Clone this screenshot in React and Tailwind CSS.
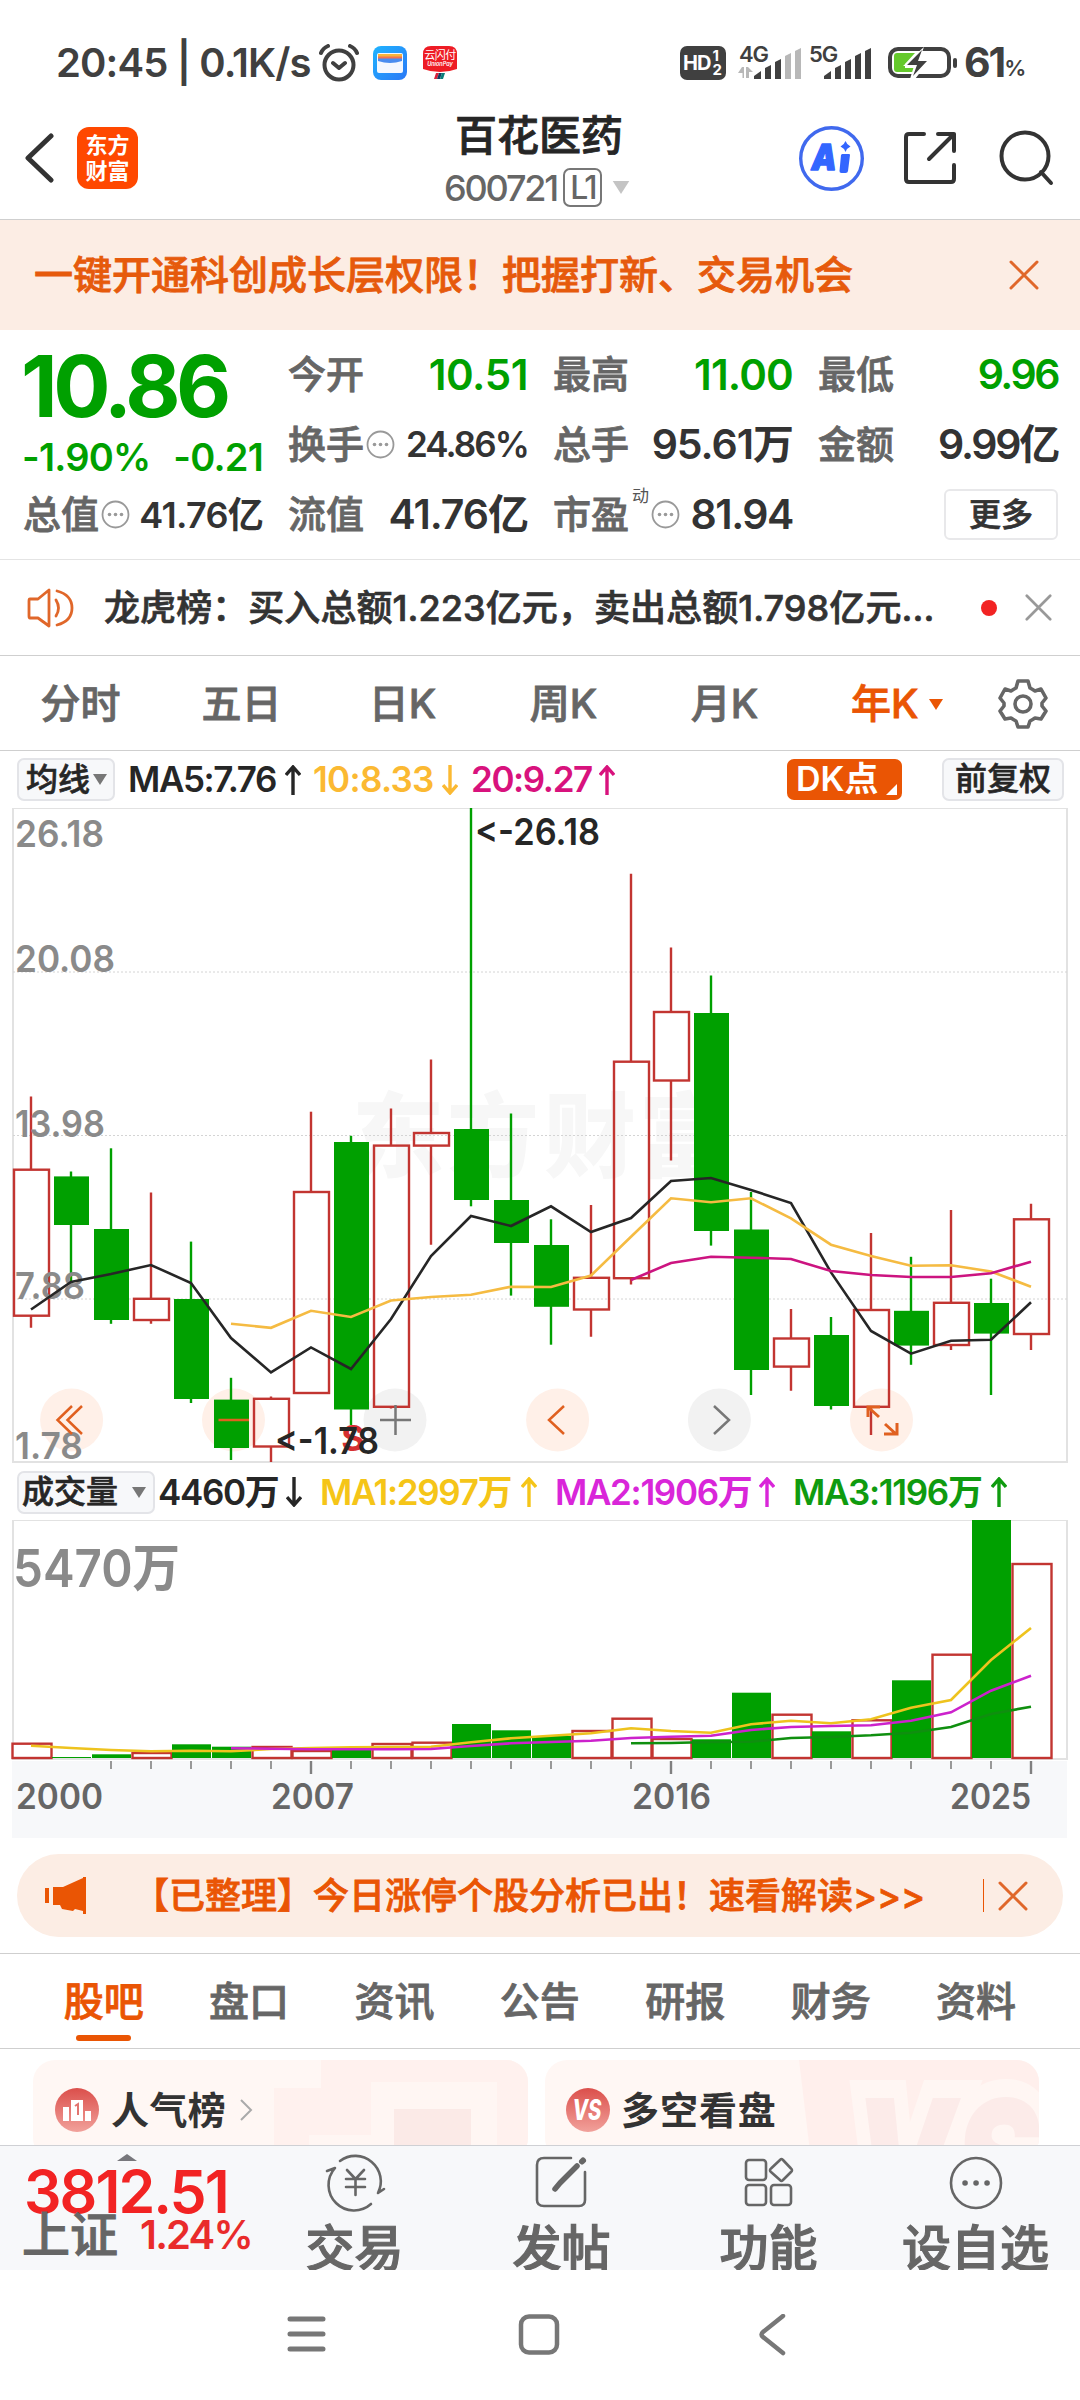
import React from "react";

const UP = "#c23531";
const DOWN = "#00a000";

// direction, high, body top, body bottom, low
const candles = [
  ["up", 288.5, 361.7, 507.7, 519.8],
  ["down", 363.5, 368.4, 417, 474],
  ["down", 340.3, 421, 512, 515.8],
  ["up", 384.5, 490.8, 512, 515.8],
  ["down", 433.6, 491, 591, 595],
  ["down", 569.8, 591.6, 640, 652],
  ["up", 588.5, 590.8, 638.5, 654],
  ["up", 303.7, 384, 585, 585],
  ["down", 327.8, 334, 601.5, 617],
  ["up", 300.6, 337.6, 598.8, 600.6],
  ["up", 251.5, 325, 337.6, 436.7],
  ["down", 0, 321, 392, 398.3],
  ["down", 305.5, 392, 435, 487.6],
  ["down", 411.3, 437, 498.8, 536.7],
  ["up", 397, 469.8, 501.5, 528.7],
  ["up", 65.8, 253.7, 470.2, 476.5],
  ["up", 139.4, 204, 272.5, 352.4],
  ["down", 167.5, 205, 423, 437.6],
  ["down", 384, 421.5, 562, 587],
  ["up", 501, 530.5, 558.6, 582.7],
  ["down", 509, 527, 598, 601.5],
  ["up", 425, 502, 598.8, 627],
  ["down", 448.8, 502.8, 537.6, 556.8],
  ["up", 402, 494.8, 537, 542],
  ["down", 470.7, 495, 525.6, 587],
  ["up", 395.7, 411.3, 526, 542],
];

const ma5 = [501.5, 474, 466, 457, 475, 530, 564.4, 539.4, 561, 511, 448, 408, 418, 398.3, 424, 410, 373, 370, 382, 395, 464.4, 523, 545.7, 532.7, 531.8, 494.3];
const ma10 = [515.8, 519.8, 502.8, 509, 492.5, 489, 486.7, 478.7, 479, 467.5, 428.7, 390.3, 394.3, 390.3, 410.4, 436.7, 448, 457.7, 457.3, 463.5, 478.7];
const ma20 = [472, 455, 448.8, 449.7, 451, 463, 467, 469, 469, 465.3, 453.7];

const volumes = [223.7, 237, 234.3, 233, 224.3, 226.7, 227, 231, 230, 224, 222.7, 204, 210.3, 216, 211, 198.7, 219, 219.3, 172.7, 194.7, 211.3, 200.3, 160.3, 134.7, 0, 44];
const vol1 = [225.7, 228, 230, 231.3, 230.7, 231.3, 229, 228, 227.3, 227, 226.7, 222.3, 218.3, 215.7, 213.3, 208.3, 211, 212.7, 204.3, 200.7, 203.3, 199.3, 187.7, 180, 140, 108];
const vol2 = [228.3, 228.7, 229.3, 229.3, 229.3, 229, 226, 223.3, 222, 220.7, 218, 216.7, 215.7, 210, 207, 206, 205.3, 200.7, 192.3, 170.7, 155.7];
const vol3 = [223.3, 223, 222, 221.7, 218, 217, 215.3, 212.7, 207, 194, 186.7];

const cx = (i) => 31 + i * 40;
const points = (arr) =>
  arr.map((y, i) => `${cx(i + candles.length - arr.length)},${y}`).join(" ");

const Close = ({ size, color, width = 3 }) => (
  <svg width={size} height={size} viewBox="0 0 30 30" fill="none" stroke={color} strokeWidth={width} strokeLinecap="round">
    <path d="M2 2L28 28M28 2L2 28" />
  </svg>
);

const Caret = ({ className, w = 14, h = 11 }) => (
  <svg width={w} height={h} viewBox="0 0 14 11" className={className}>
    <path d="M0 0H14L7 11Z" fill="currentColor" />
  </svg>
);

const Arrow = ({ down, className }) => (
  <svg width="16" height="30" viewBox="0 0 16 30" fill="none" stroke="currentColor" strokeWidth="3.4" className={className}>
    {down ? <path d="M8 0V28M1 20L8 28L15 20" /> : <path d="M8 30V2M1 10L8 2L15 10" />}
  </svg>
);

const Info = () => (
  <svg width="29" height="29" viewBox="0 0 29 29" className="ml-[2px] shrink-0">
    <circle cx="14.5" cy="14.5" r="13" fill="none" stroke="#999" strokeWidth="1.8" />
    <circle cx="8.5" cy="14.5" r="1.8" fill="#999" />
    <circle cx="14.5" cy="14.5" r="1.8" fill="#999" />
    <circle cx="20.5" cy="14.5" r="1.8" fill="#999" />
  </svg>
);

const Signal = ({ label, weak }) => (
  <div className="relative w-[66px] h-[34px]">
    <span className="absolute left-[1px] -top-[1px] text-[22px] leading-[18px] font-semibold tracking-[-0.05em]">{label}</span>
    <svg width="66" height="34" viewBox="0 0 66 34" className="absolute left-0 top-0" fill="#404040">
      {weak && <path d="M0 27L4 21H6V32H4.500V27ZM8 21H10L15 26H11V32H8Z" fill="#b8b8b8" />}
      <path d="M16 33V30L23 25V33Z" />
      <path d="M27 33V22L33 19V33Z" />
      <path d="M37 33V16L43 13V33Z" />
      <path d="M47 33V10L53 7V33Z" fill={weak ? "#b8b8b8" : "#404040"} />
      <path d="M57 33V5L63 2V33Z" fill={weak ? "#b8b8b8" : "#404040"} />
    </svg>
  </div>
);

const StatusBar = () => (
  <div className="h-[97px] pt-[29px] pl-[56px] flex items-center text-[#404040]">
    <span className="w-[263px] text-[40px] font-semibold tracking-[-0.022em] whitespace-nowrap">20:45 | 0.1K/s</span>
    <svg width="40" height="38" viewBox="0 0 40 38" fill="none" stroke="#404040" strokeWidth="4" strokeLinecap="round" strokeLinejoin="round">
      <circle cx="20" cy="21" r="14.500" />
      <path d="M14 19L20 24L26 19M2 9Q4 4 9 2M38 9Q36 4 31 2" />
    </svg>
    <svg width="34" height="34" viewBox="0 0 34 34" className="ml-[14px]">
      <defs>
        <linearGradient id="wallet" x1="0" y1="0" x2="1" y2="1">
          <stop offset="0" stopColor="#1fb4ff" />
          <stop offset="1" stopColor="#2a78f6" />
        </linearGradient>
      </defs>
      <rect width="34" height="34" rx="8" fill="url(#wallet)" />
      <rect x="4" y="7" width="26" height="20" rx="2" fill="#f4f8ff" />
      <rect x="5" y="8" width="24" height="4" fill="#f6b53c" />
      <rect x="5" y="10.500" width="24" height="2.500" fill="#f2734f" />
      <path d="M5 12.500H29V15Q17 19 5 15Z" fill="#4a8df0" />
    </svg>
    <div className="ml-[16px] w-[34px] h-[34px] relative text-white text-center">
      <svg width="34" height="34" viewBox="0 0 34 34" className="absolute inset-0">
        <path d="M8 0H26Q34 0 34 8V23Q26 26 17 26T0 23V8Q0 0 8 0Z" fill="#ee1c25" />
        <path d="M13 27H16L14 33H11Z" fill="#d8233c" />
        <path d="M16 27H19L17 33H14Z" fill="#123e63" />
        <path d="M19 27H22L20 33H17Z" fill="#0a7d78" />
      </svg>
      <div className="relative pt-[4px] text-[11px] leading-[11px] whitespace-nowrap tracking-[-0.5px]">云闪付</div>
      <div className="relative text-[5.500px] leading-[7px] italic font-semibold">UnionPay</div>
    </div>
    <div className="ml-[223px] w-[46px] h-[34px] rounded-[7px] bg-[#404040] text-white flex items-center pl-[3px]">
      <span className="text-[20px] font-bold tracking-[-0.05em]">HD</span>
      <span className="ml-[2px] text-[15px] leading-[14px] font-bold flex flex-col">
        <span>1</span>
        <span>2</span>
      </span>
    </div>
    <div className="ml-[12px] flex gap-[4px]">
      <Signal label="4G" weak />
      <Signal label="5G" />
    </div>
    <svg width="70" height="32" viewBox="0 0 70 32" className="ml-[14px]">
      <rect x="2" y="2" width="59" height="27" rx="8" fill="none" stroke="#404040" strokeWidth="4" />
      <path d="M9 6H27L17 17V21H28L26 25H9Q6 25 6 22V9Q6 6 9 6Z" fill="#65c92c" />
      <path d="M36 0L15 19H26L22 32H27L42 13H31L36 0Z" fill="#fff" />
      <path d="M34 3L19 18H29L25 29L39 14H30Z" fill="#404040" />
      <rect x="65" y="11" width="4" height="10" rx="2" fill="#404040" />
    </svg>
    <span className="ml-[6px] text-[41px] font-bold tracking-[-0.05em]">61</span>
    <span className="pt-[11px] text-[22px] font-semibold">%</span>
  </div>
);

const TitleBar = () => (
  <header className="h-[123px] border-b border-[#cfcfcf] pl-[25px] flex items-center">
    <svg width="30" height="50" viewBox="0 0 30 50" fill="none" stroke="#333" strokeWidth="5" strokeLinecap="round" strokeLinejoin="round">
      <path d="M26 3L3 25L26 47" />
    </svg>
    <div className="ml-[22px] w-[61px] h-[62px] rounded-[12px] bg-[#ff4800] text-white text-[22px] leading-[26px] font-bold text-center pt-[5px]">
      东方
      <br />
      财富
    </div>
    <div className="ml-[268px] w-[266px] pt-[9px] flex flex-col items-center">
      <h1 className="text-[42px] leading-[50px] font-medium text-[#262626] [-webkit-text-stroke:0.8px]">百花医药</h1>
      <div className="h-[53px] -ml-[3px] flex items-center text-[#666]">
        <span className="text-[36px] font-medium tracking-[-0.06em]">600721</span>
        <span className="ml-[6px] h-[39px] w-[39px] border-2 border-[#777] rounded-[7px] text-[32px] leading-[35px] text-center tracking-[-0.08em] font-medium">L1</span>
        <Caret w={20} h={13} className="ml-[9px] text-[#c4c4c4]" />
      </div>
    </div>
    <div className="ml-[127px] w-[65px] h-[65px] shrink-0">
      <svg width="65" height="65" viewBox="0 0 65 65">
        <circle cx="32.5" cy="32.5" r="30.800" fill="none" stroke="#4069ee" strokeWidth="3.4" />
        <text x="12.500" y="44" fontSize="36" fontWeight="900" fontStyle="italic" fill="#3366ff" stroke="#3366ff" strokeWidth="1.500" strokeLinejoin="round" textLength="25" lengthAdjust="spacingAndGlyphs">A</text>
        <path d="M43 28H50Q51 28 51 29L49 45Q48.800 47 46.500 47H42.500Q40.300 47 40.500 45L42 29Z" fill="#3366ff" />
        <path d="M46.500 15Q48 19 51.500 20.500Q48 22 46.500 26Q45 22 41.500 20.500Q45 19 46.500 15Z" fill="#3366ff" />
      </svg>
    </div>
    <svg width="54" height="54" viewBox="0 0 54 54" fill="none" stroke="#333" strokeWidth="4" strokeLinecap="round" strokeLinejoin="round" className="ml-[40px] shrink-0">
      <path d="M20 3H5Q2 3 2 6V48Q2 51 5 51H47Q50 51 50 48V34M34 3H50V20M50 3L25 28" />
    </svg>
    <svg width="56" height="56" viewBox="0 0 56 56" fill="none" stroke="#333" strokeWidth="4" strokeLinecap="round" className="ml-[41px] shrink-0">
      <circle cx="26" cy="26" r="23.500" />
      <path d="M42 42L52 53" />
    </svg>
  </header>
);

const Stat = ({ label, value, green, info, size = "text-[41px] tracking-[-0.025em]" }) => (
  <div className="h-[69px] flex items-center">
    <span className="-ml-[1px] text-[38px] text-[#666] font-medium [-webkit-text-stroke:0.8px]">{label}</span>
    {info}
    <span className={`ml-auto font-semibold whitespace-nowrap ${size} ${green ? "text-[#00a000]" : "text-[#333]"}`}>
      {value}
    </span>
  </div>
);

const Quote = () => (
  <section className="h-[230px] border-b border-[#e4e4e4] pl-[24px] pr-[22px] pt-[10px]">
    <div className="grid grid-cols-4 gap-x-[26px]">
      <div className="row-span-2 text-[#00a000]">
        <div className="-ml-[3px] pt-[9px] text-[85px] leading-[76px] font-bold tracking-[-0.052em]">10.86</div>
        <div className="-ml-[2px] pt-[9px] flex justify-between text-[38px] leading-[46px] font-semibold tracking-[-0.02em]">
          <span>-1.90%</span>
          <span>-0.21</span>
        </div>
      </div>
      <Stat label="今开" value="10.51" green size="text-[42px] tracking-[-0.01em]" />
      <Stat label="最高" value="11.00" green size="text-[42px] tracking-[-0.02em]" />
      <Stat label="最低" value="9.96" green size="text-[41px] tracking-[-0.06em]" />
      <Stat label="换手" value="24.86%" size="text-[35px] tracking-[-0.055em]" info={<Info />} />
      <Stat label="总手" value="95.61万" />
      <Stat label="金额" value="9.99亿" size="text-[41px] tracking-[-0.055em]" />
      <Stat label="总值" value="41.76亿" size="text-[36px] tracking-[-0.02em]" info={<Info />} />
      <Stat label="流值" value="41.76亿" />
      <Stat
        label="市盈"
        value="81.94"
        size="text-[41px] tracking-[-0.035em]"
        info={
          <>
            <span className="ml-[3px] self-start text-[17px] leading-[32px] text-[#555]">动</span>
            <Info />
          </>
        }
      />
      <div className="h-[69px] flex items-center justify-end">
        <button className="w-[114px] h-[51px] rounded-[6px] border-2 border-[#e8e8ea] text-[32px] leading-[44px] font-medium text-[#333] [-webkit-text-stroke:0.7px]">更多</button>
      </div>
    </div>
  </section>
);

const News = () => (
  <section className="h-[96px] border-b border-[#cfcfcf] pl-[27px] flex items-center">
    <svg width="47" height="40" viewBox="0 0 47 40" fill="none" stroke="#e0672a" strokeWidth="2.800" strokeLinejoin="round" strokeLinecap="round">
      <path d="M3 11H11L22 2V38L11 30H3Q2 30 2 28V13Q2 11 3 11ZM29 12Q34 20 29 28M30 3Q45 7 45 20T30 37" />
    </svg>
    <p className="ml-[30px] w-[864px] text-[36px] font-medium text-[#333] whitespace-nowrap tracking-[0.002em] [-webkit-text-stroke:0.7px]">龙虎榜：买入总额1.223亿元，卖出总额1.798亿元...</p>
    <span className="ml-[13px] w-[16px] h-[16px] rounded-full bg-[#f22323]" />
    <span className="ml-[28px]">
      <Close size={27} color="#999" />
    </span>
  </section>
);

const Periods = () => (
  <nav className="h-[95px] pt-[2px] border-b border-[#cfcfcf] flex items-center text-[40px] font-medium text-[#666] [-webkit-text-stroke:0.8px]">
    {["分时", "五日", "日K", "周K", "月K"].map((p) => (
      <span key={p} className="w-[161px] text-center">{p}</span>
    ))}
    <span className="ml-[46px] text-[#ea5504]">年K</span>
    <Caret className="ml-[10px] text-[#ea5504]" />
    <svg width="50" height="50" viewBox="0 0 50 50" fill="none" stroke="#666" strokeWidth="3.600" strokeLinejoin="round" className="ml-auto mr-[32px]">
      <path d="M20 2H30L32 9Q34 10 37 12L43 10L48 19L44 24V27L48 32L43 40L37 39Q34 41 32 42L30 48H20L18 42Q16 41 13 39L7 40L2 32L6 27V24L2 19L7 10L13 12Q16 10 18 9Z" />
      <circle cx="25" cy="25" r="8" />
    </svg>
  </nav>
);

const MaLegend = () => (
  <div className="h-[57px] pl-[17px] pr-[16px] flex items-center text-[35px] font-semibold tracking-[-0.04em] text-[#262626] whitespace-nowrap">
    <span className="w-[98px] h-[43px] rounded-[7px] border-2 border-[#e3e4e8] bg-[#f7f8fa] flex items-center pl-[7px] text-[32px] font-medium tracking-normal [-webkit-text-stroke:0.6px]">
      均线
      <Caret className="ml-[3px] text-[#777]" />
    </span>
    <span className="ml-[13px] w-[157px]">MA5:7.76</span>
    <Arrow />
    <span className="ml-[12px] w-[129px] text-[#fbb932] tracking-[-0.02em]">10:8.33</span>
    <Arrow down className="text-[#fbb932]" />
    <span className="ml-[13px] w-[128px] text-[#d8127d]">20:9.27</span>
    <Arrow className="text-[#d8127d]" />
    <span className="relative ml-auto w-[115px] h-[41px] rounded-[7px] bg-[#ea5504] text-white text-[34px] leading-[40px] font-semibold pl-[9px] tracking-normal">
      DK点
      <svg width="11" height="11" viewBox="0 0 11 11" className="absolute right-[5px] bottom-[5px]">
        <path d="M11 0V11H0Z" fill="#fff" />
      </svg>
    </span>
    <span className="ml-[40px] w-[122px] h-[43px] rounded-[7px] border-2 border-[#e3e4e8] bg-[#f7f8fa] text-center text-[32px] leading-[38px] font-medium tracking-normal [-webkit-text-stroke:0.6px]">前复权</span>
  </div>
);

const priceLabels = [
  ["26.18", 39.4, 89],
  ["20.08", 164.4, 100],
  ["13.98", 328.7, 90],
  ["7.88", 491, 70],
  ["1.78", 651, 68],
];

const PriceChart = () => (
  <svg width="1080" height="656" viewBox="0 0 1080 656" className="block">
    <g fill="none" stroke="#e2e2e2" strokeWidth="2">
      <rect x="13" y="0" width="1054" height="654" />
    </g>
    <g fill="#f7f7f7" fontSize="92" fontWeight="900">
      <text x="352" y="362">东</text>
      <text x="447" y="362">方</text>
      <text x="544" y="362">财</text>
      <text x="639" y="362">富</text>
    </g>
    {[164, 327.5, 491].map((y) => (
      <line key={y} x1="13" x2="1067" y1={y} y2={y} stroke="#d4d4d4" strokeWidth="1" strokeDasharray="2 2" />
    ))}
    {[["#fff0e8", 71.6], ["#fff0e8", 233.5], ["#f2f2f2", 395], ["#fff0e8", 557.6], ["#f2f2f2", 719.4], ["#fff0e8", 881.5]].map(([fill, x]) => (
      <circle key={x} cx={x} cy="612" r="31.500" fill={fill} />
    ))}
    {candles.map(([dir, high, top, bottom, low], i) =>
      dir === "down" ? (
        <g key={i} fill={DOWN}>
          <rect x={cx(i) - 1.2} y={high} width="2.4" height={low - high} />
          <rect x={cx(i) - 17} y={top} width="35" height={bottom - top} />
        </g>
      ) : (
        <g key={i} fill="none" stroke={UP} strokeWidth="2.4">
          <path d={`M${cx(i)} ${high}V${top}M${cx(i)} ${bottom}V${low}`} />
          <rect x={cx(i) - 17} y={top} width="35" height={bottom - top} />
        </g>
      )
    )}
    <g fill="#8a8a8a" fontSize="37.500" fontWeight="600">
      {priceLabels.map(([t, y, w]) => (
        <text key={t} x="15" y={y} textLength={w} lengthAdjust="spacingAndGlyphs">{t}</text>
      ))}
    </g>
    <g fill="none" strokeWidth="2.600">
      <polyline points={points(ma5)} stroke="#262626" />
      <polyline points={points(ma10)} stroke="#f5bb42" />
      <polyline points={points(ma20)} stroke="#cc1480" />
    </g>
    <g fill="none" stroke="#e06020" strokeWidth="2.500">
      <path d="M72 598L57.500 612L72 626M82 598L67.500 612L82 626" />
      <path d="M218.500 612H249" />
      <path d="M564 598L549 612L564 626" />
      <path d="M868 609V599H880M868 599L879 609M885 616L896 626M897 615V626H884" strokeWidth="3" />
    </g>
    <g fill="none" stroke="#777" strokeWidth="2.500">
      <path d="M380 612H411M395.500 597V627" />
      <path d="M714 598L729 612L714 626" />
    </g>
    <text x="353" y="643" fontSize="36" fontWeight="700" fill="#d63031" textAnchor="middle">S</text>
    <g fill="#262626" fontSize="37" fontWeight="600">
      <text x="475" y="37" textLength="125" lengthAdjust="spacingAndGlyphs">&lt;-26.18</text>
      <text x="275" y="645.6" textLength="104" lengthAdjust="spacingAndGlyphs">&lt;-1.78</text>
    </g>
  </svg>
);

const VolumeLegend = () => (
  <div className="h-[56px] pl-[17px] flex items-center text-[35px] font-semibold tracking-[-0.038em] text-[#262626] whitespace-nowrap">
    <span className="w-[138px] h-[43px] rounded-[7px] border-2 border-[#e3e4e8] bg-[#f7f8fa] flex items-center pl-[3px] text-[32px] font-medium tracking-normal [-webkit-text-stroke:0.6px]">
      成交量
      <Caret className="ml-[14px] text-[#777]" />
    </span>
    <span className="ml-[3px] w-[128px]">4460万</span>
    <Arrow down />
    <span className="ml-[18px] w-[201px] text-[#f5c518]">MA1:2997万</span>
    <Arrow className="text-[#f5c518]" />
    <span className="ml-[18px] w-[204px] text-[#d926d9]">MA2:1906万</span>
    <Arrow className="text-[#d926d9]" />
    <span className="ml-[18px] w-[198px] text-[#0f9b0f]">MA3:1196万</span>
    <Arrow className="text-[#0f9b0f]" />
  </div>
);

const VolumeChart = () => (
  <svg width="1080" height="318" viewBox="0 0 1080 318" className="block">
    <rect x="13" y="0" width="1054" height="239" fill="none" stroke="#e2e2e2" strokeWidth="2" />
    <rect x="12" y="241" width="1055" height="77" fill="#f7f8fa" />
    <text x="13" y="67" fontSize="52" fontWeight="600" fill="#8a8a8a" textLength="167" lengthAdjust="spacingAndGlyphs">5470万</text>
    {volumes.map((y, i) =>
      candles[i][0] === "down" ? (
        <rect key={i} x={cx(i) - 19} y={y} width="39" height={238 - y} fill={DOWN} />
      ) : (
        <rect key={i} x={cx(i) - 18.5} y={y} width="39" height={238 - y} fill="#fff" stroke={UP} strokeWidth="2.4" />
      )
    )}
    <g fill="none" strokeWidth="2.600">
      <polyline points={points(vol3)} stroke="#0f8f0f" />
      <polyline points={points(vol1)} stroke="#eec31e" />
      <polyline points={points(vol2)} stroke="#cc22cc" />
    </g>
    {candles.slice(2).map((_, n) => {
      const i = n + 2;
      const major = i === 7 || i === 16 || i === 25;
      return <line key={i} x1={cx(i)} x2={cx(i)} y1="241" y2={major ? 254 : 249} stroke="#808080" strokeWidth={major ? 2.4 : 1.6} />;
    })}
    <g fill="#666" fontSize="35" fontWeight="600">
      <text x="16" y="289" textLength="87" lengthAdjust="spacingAndGlyphs">2000</text>
      <text x="271" y="289" textLength="83" lengthAdjust="spacingAndGlyphs">2007</text>
      <text x="632" y="289" textLength="79" lengthAdjust="spacingAndGlyphs">2016</text>
      <text x="950" y="289" textLength="81" lengthAdjust="spacingAndGlyphs">2025</text>
    </g>
  </svg>
);

const Promo = () => (
  <div className="mt-[16px] mx-[17px] h-[83px] rounded-full bg-[#fcede4] flex items-center text-[#ea5504]">
    <svg width="42" height="37" viewBox="0 0 42 37" className="ml-[28px] shrink-0" fill="#ea5504">
      <path d="M0 11H4V26H0ZM8 10H18L38 1V0H41V37H38V34L30 32L28 34L17 32L15 28H8Z" />
    </svg>
    <span className="ml-[46px] w-[798px] text-[36px] font-medium whitespace-nowrap [-webkit-text-stroke:0.8px]">
      【已整理】今日涨停个股分析已出！速看解读&gt;&gt;&gt;
    </span>
    <span className="ml-[52px] mr-[14px] w-[1px] h-[33px] bg-[#ea5504]" />
    <Close size={30} color="#e0672a" />
  </div>
);

const Tabs = () => (
  <nav className="mt-[16px] h-[96px] border-y border-[#cfcfcf] pl-[31px] flex text-[40px] font-medium text-[#666] [-webkit-text-stroke:0.8px]">
    {["股吧", "盘口", "资讯", "公告", "研报", "财务", "资料"].map((t, i) => (
      <div key={t} className={`w-[145.400px] flex flex-col items-center pt-[18px] ${i === 0 ? "text-[#ea5504]" : ""}`}>
        <span className="leading-[60px]">{t}</span>
        {i === 0 && <span className="mt-[3px] w-[55px] h-[6px] rounded-full bg-[#ea5504]" />}
      </div>
    ))}
  </nav>
);

const Cards = () => (
  <section className="h-[96px] pt-[11px] pl-[33px] flex gap-[17px] overflow-hidden text-[38px] font-bold text-[#333]">
    <div className="relative w-[495px] h-[100px] rounded-[22px] overflow-hidden bg-[#fff7f4]">
      <svg width="495" height="100" className="absolute inset-0">
        <path d="M288 0H495V100H241V28H288Z" fill="#fff1ee" />
        <path d="M338 22H464V100H276V75H338Z" fill="#fff6f3" />
        <rect x="361" y="49" width="77" height="51" fill="#fbeae7" />
      </svg>
      <div className="relative pl-[22px] h-[100px] flex items-center">
        <svg width="44" height="44" viewBox="0 0 44 44">
          <defs>
            <linearGradient id="badge" x1="0" y1="0" x2="0" y2="1">
              <stop offset="0" stopColor="#db4f4b" />
              <stop offset="1" stopColor="#f1a19b" />
            </linearGradient>
          </defs>
          <circle cx="22" cy="22" r="22" fill="url(#badge)" />
          <path d="M8 19H14V33H8ZM16 12H28V33H16ZM30 23H36V33H30Z" fill="#fff" />
          <path d="M20 18L23 16V27" stroke="#e27570" strokeWidth="2" fill="none" />
        </svg>
        <span className="ml-[12px] tracking-[0.01em]">人气榜</span>
        <svg width="14" height="22" viewBox="0 0 14 22" fill="none" stroke="#aaa" strokeWidth="2" className="ml-[13px]">
          <path d="M2 1L12 11L2 21" />
        </svg>
      </div>
    </div>
    <div className="relative w-[494px] h-[100px] rounded-[22px] overflow-hidden bg-[#fff7f4]">
      <svg width="494" height="100" className="absolute inset-0">
        <path d="M254 0H494V100H266Z" fill="#ffefec" />
        <text x="308" y="162" fontSize="170" fontWeight="900" fontStyle="italic" fill="#fcebe9" stroke="#fff6f3" strokeWidth="36" paintOrder="stroke" textLength="186" lengthAdjust="spacingAndGlyphs">VS</text>
      </svg>
      <div className="relative pl-[21px] h-[100px] flex items-center">
        <svg width="44" height="44" viewBox="0 0 44 44">
          <circle cx="22" cy="22" r="22" fill="url(#badge)" />
          <text x="21" y="32" fontSize="28" fontWeight="800" fontStyle="italic" fill="#fff" textAnchor="middle" textLength="29" lengthAdjust="spacingAndGlyphs">VS</text>
        </svg>
        <span className="ml-[11px] tracking-[0.025em]">多空看盘</span>
      </div>
    </div>
  </section>
);

const actions = [
  {
    label: "交易",
    icon: (
      <>
        <path d="M14 7A25.500 25.500 0 0 1 52 39L58 35M45 50A25.500 25.500 0 0 1 9 14L1 17" />
        <path d="M21 16L29.500 25L38 16M20 25H39M20 33H39M29.500 25V41" />
      </>
    ),
  },
  {
    label: "发帖",
    icon: (
      <>
        <path d="M38 4H11Q4 4 4 11V46Q4 52 11 52H46Q52 52 52 46V18" />
        <path d="M50 6.500L49 7.500" strokeWidth="6" />
        <path d="M44 12L27 29L22 35" strokeWidth="5.500" />
      </>
    ),
  },
  {
    label: "功能",
    icon: (
      <>
        <rect x="6" y="6" width="20" height="20" rx="3" />
        <rect x="6" y="31" width="20" height="20" rx="3" />
        <rect x="31" y="31" width="20" height="20" rx="3" />
        <path d="M40 6Q41 4 43 6L51 14.500Q53 16 51 18L43 26Q41 28 40 26L31 18Q29 16 31 14.500Z" />
      </>
    ),
  },
  {
    label: "设自选",
    icon: (
      <>
        <circle cx="29" cy="29" r="25" />
        <path d="M18 29H18.100M29 29H29.100M40 29H40.100" strokeWidth="5.500" />
      </>
    ),
  },
];

const BottomBar = () => (
  <footer className="h-[125px] border-t border-[#cfd0d4] bg-[#f7f8fa] flex overflow-hidden">
    <div className="relative w-[251px] pl-[24px] shrink-0">
      <svg width="20" height="7" viewBox="0 0 20 7" className="absolute left-[117px] top-[8px]">
        <path d="M0 7L10 0L20 7Z" fill="#77777c" />
      </svg>
      <div className="pt-[17px] text-[59px] leading-[58px] font-semibold tracking-[-0.033em] text-[#f22323] whitespace-nowrap">3812.51</div>
      <div className="-mt-[9px] -ml-[2px] flex items-center h-[46px] whitespace-nowrap">
        <span className="text-[48px] font-medium text-[#666] [-webkit-text-stroke:1px]">上证</span>
        <span className="ml-[22px] text-[40px] font-semibold tracking-[-0.045em] text-[#e92b2b]">1.24%</span>
      </div>
    </div>
    {actions.map(({ label, icon }) => (
      <div key={label} className="w-[207px] pt-[8px] flex flex-col items-center">
        <svg width="58" height="58" viewBox="0 0 58 58" fill="none" stroke="#666" strokeWidth="2.600" strokeLinecap="round" strokeLinejoin="round" className="shrink-0 overflow-visible">
          {icon}
        </svg>
        <span className="text-[49px] leading-[74px] font-medium text-[#666] whitespace-nowrap [-webkit-text-stroke:1.2px]">{label}</span>
      </div>
    ))}
  </footer>
);

const SystemNav = () => (
  <div className="h-[130px] flex items-center pl-[286px] text-[#777]">
    <svg width="40" height="42" viewBox="0 0 40 42" stroke="currentColor" strokeWidth="5" strokeLinecap="round">
      <path d="M4 5H37M4 20H37M4 35H37" />
    </svg>
    <svg width="42" height="42" viewBox="0 0 42 42" fill="none" stroke="currentColor" strokeWidth="4.500" className="ml-[192px]">
      <rect x="3" y="2.500" width="36" height="36" rx="8" />
    </svg>
    <svg width="30" height="42" viewBox="0 0 30 42" fill="none" stroke="currentColor" strokeWidth="4.500" strokeLinecap="round" strokeLinejoin="round" className="ml-[199px]">
      <path d="M24 2L4 18Q1 20.500 4 23L24 39" />
    </svg>
  </div>
);

const App = () => {
  return (
    <div className="w-[1080px] h-[2400px] overflow-hidden bg-white font-['Inter','Noto_Sans_CJK_SC',sans-serif] leading-normal">
      <StatusBar />
      <TitleBar />
      <div className="h-[110px] bg-[#fcede4] pl-[34px] pr-[41px] flex items-center justify-between text-[#e65a0c]">
        <span className="text-[39px] font-medium [-webkit-text-stroke:0.8px]">一键开通科创成长层权限！把握打新、交易机会</span>
        <Close size={30} color="#e0672a" />
      </div>
      <Quote />
      <News />
      <Periods />
      <MaLegend />
      <PriceChart />
      <VolumeLegend />
      <VolumeChart />
      <Promo />
      <Tabs />
      <Cards />
      <BottomBar />
      <SystemNav />
    </div>
  );
};

export default App;
